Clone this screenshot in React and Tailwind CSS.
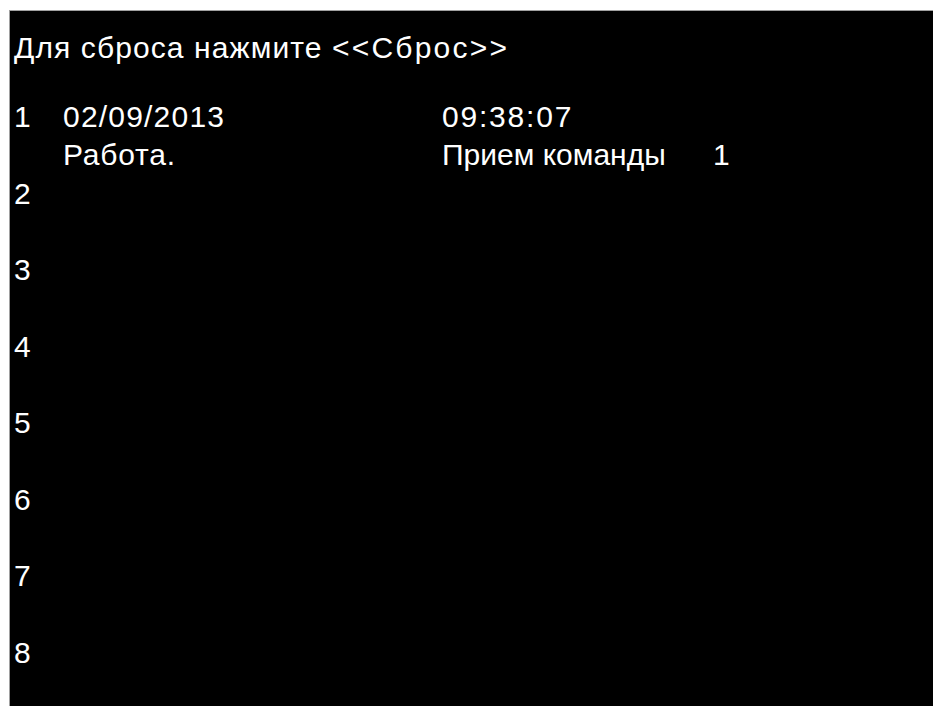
import React from "react";

const entries = [
  { n: 1, date: "02/09/2013", time: "09:38:07", state: "Работа.", event: "Прием команды", code: "1" },
  { n: 2 },
  { n: 3 },
  { n: 4 },
  { n: 5 },
  { n: 6 },
  { n: 7 },
  { n: 8 },
];

const Entry = ({ item }) => (
  <div className="flex h-[76.5px]">
    <div className="w-[49px] shrink-0">{item.n}</div>
    <div className="w-[379px] shrink-0">
      <div className="tracking-[1.2px]">{item.date}</div>
      <div className="tracking-[0.8px]">{item.state}</div>
    </div>
    <div className="flex-1">
      <div className="tracking-[1.8px]">{item.time}</div>
      {item.event && (
        <div className="flex">
          <span className="w-[271px] shrink-0">{item.event}</span>
          <span>{item.code}</span>
        </div>
      )}
    </div>
  </div>
);

export default function App() {
  return (
    <div className="h-screen w-full bg-white pl-[9px] pt-[10px] overflow-hidden">
      <div
        className="h-full bg-black border-l border-t border-[#a0a0a0] pl-[4px] pt-[18px] text-white text-[30px] leading-[38px] whitespace-nowrap overflow-hidden"
        style={{ fontFamily: '"Liberation Sans", Arial, sans-serif' }}
      >
        <div className="mb-[31px] tracking-[1.1px]">
          Для сброса нажмите <span className="tracking-[2.2px]">&lt;&lt;Сброс&gt;&gt;</span>
        </div>
        {entries.map((item) => (
          <Entry key={item.n} item={item} />
        ))}
      </div>
    </div>
  );
}
